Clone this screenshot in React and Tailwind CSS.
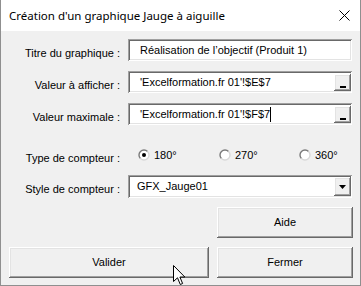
import React from 'react';

const sunken = 'shadow-[inset_1px_1px_#a0a0a0,inset_-1px_-1px_#ffffff,inset_2px_2px_#696969,inset_-2px_-2px_#e3e3e3]';
const raised = 'shadow-[inset_-1px_-1px_#696969,inset_1px_1px_#ffffff,inset_-2px_-2px_#a0a0a0,inset_2px_2px_#e3e3e3]';

const Label = ({ children }) => (
  <div className="w-[119px] shrink-0 text-right pt-[6px] flex items-center justify-end whitespace-nowrap">
    {children}
  </div>
);

const Radio = ({ checked, label, className }) => (
  <div className={`flex items-center gap-[4px] ${className}`}>
    <svg width="12" height="12" viewBox="0 0 12 12">
      <circle cx="6" cy="6" r="5" fill="#fff" />
      <path d="M2.46 9.54 A5 5 0 0 1 9.54 2.46" fill="none" stroke="#7a7a7a" strokeWidth="1.4" />
      <path d="M9.54 2.46 A5 5 0 0 1 2.46 9.54" fill="none" stroke="#d8d8d8" strokeWidth="1.4" />
      {checked && <circle cx="6" cy="6" r="2" fill="#000" />}
    </svg>
    <span>{label}</span>
  </div>
);

const RefButton = () => (
  <div className={`w-[17px] h-[17px] bg-[#f0f0f0] ${raised} flex items-end justify-center pb-[3px]`}>
    <div className="w-[6px] h-[2px] bg-black" />
  </div>
);

const App = () => {
  return (
    <div className="w-[361px] h-[286px] bg-[#f0f0f0] border-x border-b border-[#8f8f8f] flex flex-col relative overflow-hidden text-[11px] text-black font-['Liberation_Sans',Arial,sans-serif]">
      {/* barre de titre */}
      <div className="h-[31px] bg-white flex items-center justify-between pl-[8px] pr-[10px] shrink-0">
        <span className="text-[11.5px] font-['Noto_Sans',sans-serif]">Création d'un graphique Jauge à aiguille</span>
        <svg width="11" height="11" viewBox="0 0 11 11">
          <path d="M0.5 0.5 L10.5 10.5 M10.5 0.5 L0.5 10.5" stroke="#000" strokeWidth="1" />
        </svg>
      </div>

      <div className="flex flex-col pt-[8px]">
        <div className="flex h-[22px] gap-[8px]">
          <Label>Titre du graphique :</Label>
          <div className={`w-[224px] bg-white ${sunken} flex items-center pl-[12px]`}>
            Réalisation de l’objectif (Produit 1)
          </div>
        </div>

        <div className="flex h-[22px] gap-[8px] mt-[10px]">
          <Label>Valeur à afficher :</Label>
          <div className={`w-[224px] bg-white ${sunken} flex items-center justify-between pl-[12px] pr-[1px]`}>
            <span>'Excelformation.fr 01'!$E$7</span>
            <RefButton />
          </div>
        </div>

        <div className="flex h-[22px] gap-[8px] mt-[10px]">
          <Label>Valeur maximale :</Label>
          <div className={`w-[224px] bg-white ${sunken} flex items-center justify-between pl-[12px] pr-[1px]`}>
            <span className="flex items-center">
              'Excelformation.fr 01'!$F$7
              <span className="inline-block w-px h-[15px] bg-black" />
            </span>
            <RefButton />
          </div>
        </div>

        <div className="flex h-[22px] gap-[8px] mt-[19px]">
          <Label>Type de compteur :</Label>
          <div className="flex items-center">
            <Radio checked label="180°" className="ml-[10px] w-[81px]" />
            <Radio label="270°" className="w-[80px]" />
            <Radio label="360°" />
          </div>
        </div>

        <div className="flex h-[23px] gap-[8px] mt-[9px]">
          <Label>Style de compteur :</Label>
          <div className={`w-[224px] bg-white ${sunken} flex items-center justify-between pl-[9px] pr-[1px]`}>
            <span>GFX_Jauge01</span>
            <div className={`w-[17px] h-[19px] bg-[#f0f0f0] ${raised} flex items-center justify-center`}>
              <svg width="7" height="4" viewBox="0 0 7 4">
                <path d="M0 0 L7 0 L3.5 4 Z" fill="#000" />
              </svg>
            </div>
          </div>
        </div>

        <div className="flex justify-end pr-[7px] mt-[9px]">
          <button className={`w-[136px] h-[31px] bg-[#f0f0f0] ${raised}`}>Aide</button>
        </div>

        <div className="flex gap-[8px] pl-[8px] mt-[9px]">
          <button className={`w-[200px] h-[31px] bg-[#f0f0f0] ${raised}`}>Valider</button>
          <button className={`w-[136px] h-[31px] bg-[#f0f0f0] ${raised}`}>Fermer</button>
        </div>
      </div>

      {/* pointeur de souris */}
      <svg className="absolute left-[172px] top-[265px]" width="13" height="21" viewBox="0 0 13 21">
        <path d="M0.5 0.5 L0.5 16.5 L4.5 12.8 L7.3 19.5 L9.6 18.5 L6.9 12 L11.8 12 Z" fill="#fff" stroke="#000" strokeWidth="1" strokeLinejoin="miter" />
      </svg>
    </div>
  );
};

export default App;
